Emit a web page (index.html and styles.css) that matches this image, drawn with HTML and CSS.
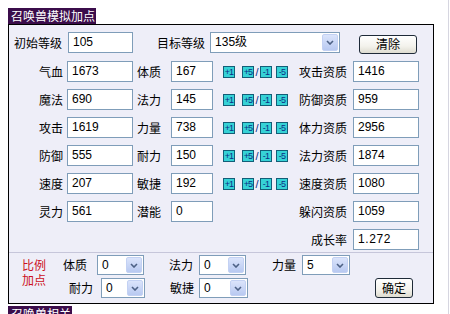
FILE: index.html
```html
<!DOCTYPE html>
<html lang="zh-CN">
<head>
<meta charset="utf-8">
<title>召唤兽模拟加点</title>
<link rel="stylesheet" href="styles.css">
</head>
<body>
<div class="page">
  <div class="title">召唤兽模拟加点</div>
  <div class="panel">
    <div class="top-row">
      <span class="lbl lbl-start">初始等级</span>
      <span class="fld fld-start">105</span>
      <span class="lbl lbl-target">目标等级</span>
      <span class="sel sel-lvl"><span class="sel-txt">135级</span><span class="arr"><svg width="8" height="5" viewBox="0 0 8 5"><path d="M1 1 L4 4 L7 1" fill="none" stroke="#4d6185" stroke-width="1.6"/></svg></span></span>
      <span class="btn btn-clear">清除</span>
    </div>

    <div class="grid">
      <span class="gl">气血</span><span class="fld">1673</span>
      <span class="gl2">体质</span><span class="fld">167</span>
      <span class="gb"><span class="pm">+1</span><span class="pm pm-gap">+5</span><span class="slash">/</span><span class="pm">-1</span><span class="pm pm-gap2">-5</span></span>
      <span class="gl3">攻击资质</span><span class="fld">1416</span>

      <span class="gl">魔法</span><span class="fld">690</span>
      <span class="gl2">法力</span><span class="fld">145</span>
      <span class="gb"><span class="pm">+1</span><span class="pm pm-gap">+5</span><span class="slash">/</span><span class="pm">-1</span><span class="pm pm-gap2">-5</span></span>
      <span class="gl3">防御资质</span><span class="fld">959</span>

      <span class="gl">攻击</span><span class="fld">1619</span>
      <span class="gl2">力量</span><span class="fld">738</span>
      <span class="gb"><span class="pm">+1</span><span class="pm pm-gap">+5</span><span class="slash">/</span><span class="pm">-1</span><span class="pm pm-gap2">-5</span></span>
      <span class="gl3">体力资质</span><span class="fld">2956</span>

      <span class="gl">防御</span><span class="fld">555</span>
      <span class="gl2">耐力</span><span class="fld">150</span>
      <span class="gb"><span class="pm">+1</span><span class="pm pm-gap">+5</span><span class="slash">/</span><span class="pm">-1</span><span class="pm pm-gap2">-5</span></span>
      <span class="gl3">法力资质</span><span class="fld">1874</span>

      <span class="gl">速度</span><span class="fld">207</span>
      <span class="gl2">敏捷</span><span class="fld">192</span>
      <span class="gb"><span class="pm">+1</span><span class="pm pm-gap">+5</span><span class="slash">/</span><span class="pm">-1</span><span class="pm pm-gap2">-5</span></span>
      <span class="gl3">速度资质</span><span class="fld">1080</span>

      <span class="gl">灵力</span><span class="fld">561</span>
      <span class="gl2">潜能</span><span class="fld">0</span>
      <span class="gl3 col6">躲闪资质</span><span class="fld">1059</span>

      <span class="gl3 col6">成长率</span><span class="fld fld-mono">1.272</span>
    </div>

    <div class="ratio">
      <div class="rl"><span class="rl-line">比例</span><span class="rl-line">加点</span></div>
      <div class="rrows">
        <div class="rrow">
          <span class="rlab ra1">体质</span>
          <span class="sel sa1"><span class="sel-txt">0</span><span class="arr"><svg width="8" height="5" viewBox="0 0 8 5"><path d="M1 1 L4 4 L7 1" fill="none" stroke="#4d6185" stroke-width="1.6"/></svg></span></span>
          <span class="rlab ra2">法力</span>
          <span class="sel sa2"><span class="sel-txt">0</span><span class="arr"><svg width="8" height="5" viewBox="0 0 8 5"><path d="M1 1 L4 4 L7 1" fill="none" stroke="#4d6185" stroke-width="1.6"/></svg></span></span>
          <span class="rlab ra3">力量</span>
          <span class="sel sa3"><span class="sel-txt">5</span><span class="arr"><svg width="8" height="5" viewBox="0 0 8 5"><path d="M1 1 L4 4 L7 1" fill="none" stroke="#4d6185" stroke-width="1.6"/></svg></span></span>
        </div>
        <div class="rrow">
          <span class="rlab rb1">耐力</span>
          <span class="sel sb1"><span class="sel-txt">0</span><span class="arr"><svg width="8" height="5" viewBox="0 0 8 5"><path d="M1 1 L4 4 L7 1" fill="none" stroke="#4d6185" stroke-width="1.6"/></svg></span></span>
          <span class="rlab rb2">敏捷</span>
          <span class="sel sb2"><span class="sel-txt">0</span><span class="arr"><svg width="8" height="5" viewBox="0 0 8 5"><path d="M1 1 L4 4 L7 1" fill="none" stroke="#4d6185" stroke-width="1.6"/></svg></span></span>
          <span class="btn btn-ok">确定</span>
        </div>
      </div>
    </div>
  </div>
  <div class="title title2">召唤兽相关</div>
</div>
</body>
</html>
```

FILE: styles.css
```css
* { box-sizing: border-box; }

body {
  margin: 0;
  background: #fff;
  color: #000;
  font-family: "Noto Sans CJK SC", "Liberation Sans", sans-serif;
  font-size: 12px;
  line-height: 14px;
}

.page {
  width: 449px;
  height: 314px;
  border-right: 1px solid #d6d6e0;
  padding: 8px 0 0 8px;
  overflow: hidden;
}

.title {
  width: 88px;
  height: 16px;
  background: #3b0d4b;
  color: #fff;
  line-height: 16px;
  padding-left: 3px;
  white-space: nowrap;
}

.title2 {
  width: 64px;
  margin-top: 2px;
}

.panel {
  width: 426px;
  height: 280px;
  border: 1px solid #000;
  background: #eeeef8;
}

/* fields */
.fld {
  display: block;
  height: 21px;
  border: 1px solid #7f9db9;
  background: #fff;
  font-family: "Liberation Sans", sans-serif;
  font-size: 12px;
  line-height: 19px;
  padding-left: 4px;
  white-space: nowrap;
}

.fld-mono {
  letter-spacing: 0.6px;
}

.sel {
  display: flex;
  align-items: stretch;
  height: 21px;
  border: 1px solid #7f9db9;
  background: #fff;
  padding: 1px;
  font-family: "Liberation Sans", "Noto Sans CJK SC", sans-serif;
  font-size: 12px;
}

.sel-txt {
  flex: 1;
  padding-left: 3px;
  line-height: 17px;
  white-space: nowrap;
  font-family: "Liberation Sans", "Noto Sans CJK SC", sans-serif;
}

.arr {
  width: 16px;
  display: flex;
  align-items: center;
  justify-content: center;
  background: linear-gradient(#dbe4fb, #b8c9f1);
  border: 1px solid #c3d1f3;
  border-radius: 2px;
}

.btn {
  display: flex;
  align-items: center;
  justify-content: center;
  border: 1px solid #1e2a38;
  border-radius: 3px;
  background: linear-gradient(#ffffff, #f3f2ec 60%, #dedcd0);
  line-height: 14px;
}

/* top row */
.top-row {
  display: flex;
  align-items: center;
  height: 21px;
  margin-top: 7px;
}

.lbl { white-space: nowrap; }
.lbl-start { margin-left: 5px; }
.fld-start { width: 65px; margin-left: 6px; }
.lbl-target { margin-left: 24px; }
.sel-lvl { width: 130px; margin-left: 5px; }
.btn-clear { width: 58px; height: 19px; margin-left: 19px; margin-top: 3px; }

/* main grid */
.grid {
  display: grid;
  grid-template-columns: 58px 66px 38px 42px 78px 62px 66px;
  grid-auto-rows: 21px;
  row-gap: 7px;
  margin-top: 8px;
}

.gl, .gl2, .gl3 {
  display: flex;
  align-items: center;
  white-space: nowrap;
}

.gl { justify-content: flex-end; padding-right: 4px; }
.gl2 { padding-left: 4px; }
.gl3 { justify-content: flex-end; padding-right: 6px; }
.col6 { grid-column: 6; }

.gb {
  display: flex;
  align-items: center;
  padding-left: 10px;
}

.pm {
  width: 12px;
  height: 12px;
  background: #36d2d6;
  border: 1px solid #135e78;
  color: #0b2f86;
  font-family: "Liberation Sans", sans-serif;
  font-size: 9px;
  line-height: 10px;
  text-align: center;
  letter-spacing: -0.8px;
}

.pm-gap { margin-left: 7px; }
.pm-gap2 { margin-left: 4px; }

.slash {
  width: 6px;
  text-align: center;
  font-family: "Liberation Sans", sans-serif;
  font-size: 11px;
  color: #0b2f86;
}

/* ratio section */
.ratio {
  display: flex;
  margin-top: 2px;
  border-top: 1px solid #c6c6da;
  height: 51px;
}

.rl {
  width: 50px;
  padding: 4px 0 0 13px;
  color: #cc1122;
  display: flex;
  flex-direction: column;
  gap: 0;
}

.rl-line {
  display: block;
  height: 15px;
  line-height: 15px;
  white-space: nowrap;
}

.rrows {
  display: flex;
  flex-direction: column;
  gap: 3px;
  padding-top: 2px;
}

.rrow {
  display: flex;
  align-items: center;
  height: 20px;
}

.rrow .sel { height: 20px; }
.rrow .sel-txt { line-height: 16px; }

.rlab { white-space: nowrap; }
.ra1 { margin-left: 4px; }
.sa1 { width: 47px; margin-left: 10px; }
.ra2 { margin-left: 25px; }
.sa2 { width: 47px; margin-left: 6px; }
.ra3 { margin-left: 26px; }
.sa3 { width: 48px; margin-left: 6px; }

.rb1 { margin-left: 10px; }
.sb1 { width: 44px; margin-left: 8px; }
.rb2 { margin-left: 25px; }
.sb2 { width: 49px; margin-left: 5px; }
.btn-ok { width: 38px; height: 20px; margin-left: 127px; }
```
